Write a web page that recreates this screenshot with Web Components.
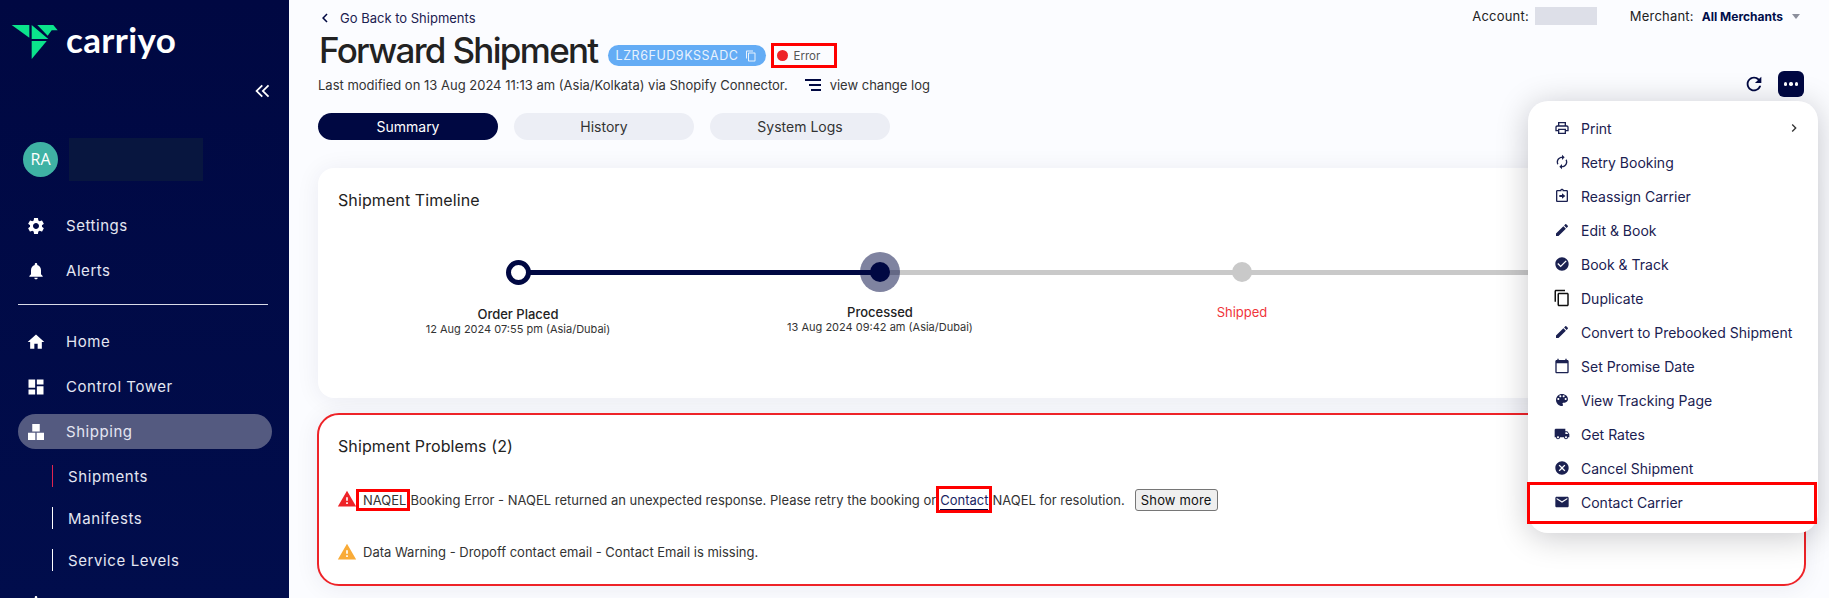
<!DOCTYPE html>
<html>
<head>
<meta charset="utf-8">
<title>Forward Shipment</title>
<style>
  html, body { height: 100%; }
  body {
    margin: 0;
    overflow: hidden;
    display: flex;
    background: #fbfcff;
    font-family: "Inter", "Liberation Sans", sans-serif;
  }
</style>
</head>
<body>
<carriyo-sidebar>
  <nav-item icon="settings">Settings</nav-item>
  <nav-item icon="bell">Alerts</nav-item>
  <nav-item slot="main" icon="home">Home</nav-item>
  <nav-item slot="main" icon="dashboard">Control Tower</nav-item>
  <nav-item slot="main" icon="boxes" active>Shipping</nav-item>
  <sub-item slot="main" current style="margin-top:1px">Shipments</sub-item>
  <sub-item slot="main">Manifests</sub-item>
  <sub-item slot="main">Service Levels</sub-item>
  <nav-item slot="main" icon="bell">Reports</nav-item>
</carriyo-sidebar>

<shipment-page>
  <shipment-card heading="Shipment Timeline">
    <shipment-timeline>
      <timeline-step kind="start" label="Order Placed" date="12 Aug 2024 07:55 pm (Asia/Dubai)"></timeline-step>
      <timeline-step kind="current" label="Processed" date="13 Aug 2024 09:42 am (Asia/Dubai)"></timeline-step>
      <timeline-step kind="error" label="Shipped"></timeline-step>
      <timeline-step kind="end"></timeline-step>
    </shipment-timeline>
  </shipment-card>
  <shipment-card heading="Shipment Problems (2)" problem>
    <problem-row level="error"><red-box>NAQEL</red-box>Booking Error - NAQEL returned an unexpected response. Please retry the booking or<red-box link>Contact</red-box>NAQEL for resolution.<more-button>Show more</more-button></problem-row>
    <problem-row level="warn">Data Warning - Dropoff contact email - Contact Email is missing.</problem-row>
  </shipment-card>
  <action-menu slot="menu">
    <menu-item icon="print" arrow>Print</menu-item>
    <menu-item icon="autorenew">Retry Booking</menu-item>
    <menu-item icon="reassign">Reassign Carrier</menu-item>
    <menu-item icon="edit">Edit &amp; Book</menu-item>
    <menu-item icon="check">Book &amp; Track</menu-item>
    <menu-item icon="copy" big>Duplicate</menu-item>
    <menu-item icon="edit">Convert to Prebooked Shipment</menu-item>
    <menu-item icon="calendar">Set Promise Date</menu-item>
    <menu-item icon="palette">View Tracking Page</menu-item>
    <menu-item icon="truck">Get Rates</menu-item>
    <menu-item icon="cancel">Cancel Shipment</menu-item>
    <menu-item icon="mail" marked>Contact Carrier</menu-item>
  </action-menu>
</shipment-page>

<script>
const ICONS = {
  settings: 'M19.14 12.94c.04-.3.06-.61.06-.94 0-.32-.02-.64-.07-.94l2.03-1.58c.18-.14.23-.41.12-.61l-1.92-3.32c-.12-.22-.37-.29-.59-.22l-2.39.96c-.5-.38-1.03-.7-1.62-.94l-.36-2.54c-.04-.24-.24-.41-.48-.41h-3.84c-.24 0-.43.17-.47.41l-.36 2.54c-.59.24-1.13.57-1.62.94l-2.39-.96c-.22-.08-.47 0-.59.22L2.74 8.87c-.12.21-.08.47.12.61l2.03 1.58c-.05.3-.09.63-.09.94s.02.64.07.94l-2.03 1.58c-.18.14-.23.41-.12.61l1.92 3.32c.12.22.37.29.59.22l2.39-.96c.5.38 1.03.7 1.62.94l.36 2.54c.05.24.24.41.48.41h3.84c.24 0 .44-.17.47-.41l.36-2.54c.59-.24 1.13-.56 1.62-.94l2.39.96c.22.08.47 0 .59-.22l1.92-3.32c.12-.22.07-.47-.12-.61l-2.01-1.58zM12 15.6c-1.98 0-3.6-1.62-3.6-3.6s1.62-3.6 3.6-3.6 3.6 1.62 3.6 3.6-1.62 3.6-3.6 3.6z',
  bell: 'M12 22c1.1 0 2-.9 2-2h-4c0 1.1.9 2 2 2zm6-6v-5c0-3.07-1.63-5.64-4.5-6.32V4c0-.83-.67-1.5-1.5-1.5s-1.5.67-1.5 1.5v.68C7.64 5.36 6 7.92 6 11v5l-2 2v1h16v-1l-2-2z',
  home: 'M10 20v-6h4v6h5v-8h3L12 3 2 12h3v8z',
  dashboard: 'M3 13h8V3H3v10zm0 8h8v-6H3v6zm10 0h8V11h-8v10zm0-18v6h8V3h-8z',
  boxes: 'M7.5 2.5h9v9h-9zM2.4 12.9h8.8v8.7H2.4zM12.8 12.9h8.8v8.7h-8.8z',
  print: 'M19 8h-1V3H6v5H5c-1.66 0-3 1.34-3 3v6h4v4h12v-4h4v-6c0-1.66-1.34-3-3-3zM8 5h8v3H8V5zm8 14H8v-4h8v4zm4-4h-2v-2H6v2H4v-4c0-.55.45-1 1-1h14c.55 0 1 .45 1 1v4z',
  autorenew: 'M12 6v3l4-4-4-4v3c-4.42 0-8 3.58-8 8 0 1.57.46 3.03 1.24 4.26L6.7 14.8c-.45-.83-.7-1.79-.7-2.8 0-3.31 2.69-6 6-6zm6.76 1.74L17.3 9.2c.44.84.7 1.79.7 2.8 0 3.31-2.69 6-6 6v-3l-4 4 4 4v-3c4.42 0 8-3.58 8-8 0-1.57-.46-3.03-1.24-4.26z',
  reassign: 'M19 3h-4.18C14.4 1.84 13.3 1 12 1s-2.4.84-2.82 2H5c-1.1 0-2 .9-2 2v14c0 1.1.9 2 2 2h14c1.1 0 2-.9 2-2V5c0-1.1-.9-2-2-2zm-7 0c.55 0 1 .45 1 1s-.45 1-1 1-1-.45-1-1 .45-1 1-1zm7 16H5V5h14v14zM8 10.5h4V8l5 4-5 4v-2.5H8z',
  edit: 'M3 17.25V21h3.75L17.81 9.94l-3.75-3.75L3 17.25zM20.71 7.04c.39-.39.39-1.02 0-1.41l-2.34-2.34c-.39-.39-1.02-.39-1.41 0l-1.83 1.83 3.75 3.75 1.83-1.83z',
  check: 'M12 2C6.48 2 2 6.48 2 12s4.48 10 10 10 10-4.48 10-10S17.52 2 12 2zm-2 15l-5-5 1.41-1.41L10 14.17l7.59-7.59L19 8l-9 9z',
  copy: 'M16 1H4c-1.1 0-2 .9-2 2v14h2V3h12V1zm3 4H8c-1.1 0-2 .9-2 2v14c0 1.1.9 2 2 2h11c1.1 0 2-.9 2-2V7c0-1.1-.9-2-2-2zm0 16H8V7h11v14z',
  calendar: 'M20 3h-1V1h-2v2H7V1H5v2H4c-1.1 0-2 .9-2 2v16c0 1.1.9 2 2 2h16c1.1 0 2-.9 2-2V5c0-1.1-.9-2-2-2zm0 18H4V8h16v13z',
  palette: 'M12 3c-4.97 0-9 4.03-9 9s4.03 9 9 9c.83 0 1.5-.67 1.5-1.5 0-.39-.15-.74-.39-1.01-.23-.26-.38-.61-.38-.99 0-.83.67-1.5 1.5-1.5H16c2.76 0 5-2.24 5-5 0-4.42-4.03-8-9-8zm-5.5 9c-.83 0-1.5-.67-1.5-1.5S5.67 9 6.5 9 8 9.67 8 10.5 7.33 12 6.5 12zm3-4C8.67 8 8 7.33 8 6.5S8.67 5 9.5 5s1.5.67 1.5 1.5S10.33 8 9.5 8zm5 0c-.83 0-1.5-.67-1.5-1.5S13.67 5 14.5 5s1.5.67 1.5 1.5S15.33 8 14.5 8zm3 4c-.83 0-1.5-.67-1.5-1.5S16.67 9 17.5 9s1.5.67 1.5 1.5-.67 1.5-1.5 1.5z',
  truck: 'M20 8h-3V4H3c-1.1 0-2 .9-2 2v11h2c0 1.66 1.34 3 3 3s3-1.34 3-3h6c0 1.66 1.34 3 3 3s3-1.34 3-3h2v-5l-3-4zM6 18.5c-.83 0-1.5-.67-1.5-1.5s.67-1.5 1.5-1.5 1.5.67 1.5 1.5-.67 1.5-1.5 1.5zm13.5-9l1.96 2.5H17V9.5h2.5zm-1.5 9c-.83 0-1.5-.67-1.5-1.5s.67-1.5 1.5-1.5 1.5.67 1.5 1.5-.67 1.5-1.5 1.5z',
  cancel: 'M12 2C6.47 2 2 6.47 2 12s4.47 10 10 10 10-4.47 10-10S17.53 2 12 2zm5 13.59L15.59 17 12 13.41 8.41 17 7 15.59 10.59 12 7 8.41 8.41 7 12 10.59 15.59 7 17 8.41 13.41 12 17 15.59z',
  mail: 'M20 4H4c-1.1 0-1.99.9-1.99 2L2 18c0 1.1.9 2 2 2h16c1.1 0 2-.9 2-2V6c0-1.1-.9-2-2-2zm0 4l-8 5-8-5V6l8 5 8-5v2z',
  refresh: 'M17.65 6.35C16.2 4.9 14.21 4 12 4c-4.42 0-7.99 3.58-7.99 8s3.57 8 7.99 8c3.73 0 6.84-2.55 7.73-6h-2.08c-.82 2.33-3.04 4-5.65 4-3.31 0-6-2.69-6-6s2.69-6 6-6c1.66 0 3.14.69 4.22 1.78L13 11h7V4l-2.35 2.35z',
  warning: 'M1 21h22L12 2 1 21zm12-3h-2v-2h2v2zm0-4h-2v-4h2v4z',
  back: 'M15.41 7.41L14 6l-6 6 6 6 1.41-1.41L10.83 12z',
  next: 'M8.59 16.59L10 18l6-6-6-6-1.41 1.41L13.17 12z',
  collapse: 'M11.6 4.6L4 12l7.6 7.4 1.5-1.5L7 12l6.1-5.9zM19.1 4.6L11.5 12l7.6 7.4 1.5-1.5-6.1-5.9 6.1-5.9z'
};

customElements.define('ui-icon', class extends HTMLElement {
  connectedCallback() {
    this.attachShadow({mode: 'open'});
    const size = this.getAttribute('size') || 16;
    this.shadowRoot.innerHTML = `
      <style>
        :host { display: inline-flex; flex: none; width: ${size}px; height: ${size}px; }
        svg { width: 100%; height: 100%; fill: currentColor; display: block; }
      </style>
      <svg viewBox="0 0 24 24"><path d="${ICONS[this.getAttribute('name')]}"/></svg>
    `;
  }
});

customElements.define('carriyo-sidebar', class extends HTMLElement {
  connectedCallback() {
    this.attachShadow({mode: 'open'});
    this.shadowRoot.innerHTML = `
      <style>
        :host {
          display: block;
          flex: none;
          width: 289px;
          height: 100%;
          overflow: hidden;
          background: linear-gradient(#000842, #010d4c);
          color: #e4e6f2;
          font-size: 15px;
        }
        .logo { display: flex; align-items: center; height: 36px; margin-top: 24px; padding-left: 11px; }
        .logo svg { width: 47px; height: 36px; flex: none; }
        .logo span {
          margin: -6px 0 0 8px;
          font: 700 35px/36px "Lato", sans-serif;
          letter-spacing: .35px;
          color: #fff;
        }
        .collapse { display: flex; justify-content: flex-end; padding-right: 17px; margin-top: 21px; color: #fff; }
        .user { display: flex; align-items: center; gap: 11px; margin: 37px 0 0 23px; height: 43px; }
        .avatar {
          width: 35px; height: 35px; border-radius: 50%;
          background: #3fb2a4; color: #fff;
          font: 500 16px/35px "Open Sans", sans-serif; text-align: center;
        }
        .name { width: 134px; height: 43px; background: #08163f; }
        .top { display: flex; flex-direction: column; gap: 10px; padding: 27px 17px 0 18px; }
        .rule { height: 1px; background: #d9dbe8; margin: 16px 21px 0 18px; }
        .rest { display: flex; flex-direction: column; gap: 10px; padding: 19px 17px 0 18px; }
      </style>
      <div class="logo">
        <svg viewBox="11 24 47 36">
          <g fill="#0be48c">
            <polygon points="11.7,25 29.3,25 29.3,37.7"/>
            <polygon points="31.7,25 31.7,39 48.3,39"/>
            <polygon points="37.3,25 53.3,25 57.7,30.3 51.7,30.3 47.7,35.7"/>
            <polygon points="31.7,41 46.7,41 31.7,59"/>
          </g>
        </svg>
        <span>carriyo</span>
      </div>
      <div class="collapse"><ui-icon name="collapse" size="20"></ui-icon></div>
      <div class="user"><div class="avatar">RA</div><div class="name"></div></div>
      <div class="top"><slot></slot></div>
      <div class="rule"></div>
      <div class="rest"><slot name="main"></slot></div>
    `;
  }
});

customElements.define('nav-item', class extends HTMLElement {
  connectedCallback() {
    this.attachShadow({mode: 'open'});
    this.shadowRoot.innerHTML = `
      <style>
        :host {
          display: flex; flex: none; align-items: center; gap: 20px;
          height: 35px; padding-left: 8px; border-radius: 18px;
          letter-spacing: .55px;
        }
        :host([active]) { background: #545a80; }
        ui-icon { color: #fff; }
      </style>
      <ui-icon name="${this.getAttribute('icon')}" size="20"></ui-icon>
      <slot></slot>
    `;
  }
});

customElements.define('sub-item', class extends HTMLElement {
  connectedCallback() {
    this.attachShadow({mode: 'open'});
    this.shadowRoot.innerHTML = `
      <style>
        :host { display: flex; flex: none; align-items: center; height: 32px; margin-left: 34px; letter-spacing: .6px; }
        .bar { width: 1px; height: 22px; background: #fff; margin-right: 15px; }
        :host([current]) .bar { background: #e0244f; }
      </style>
      <div class="bar"></div>
      <slot></slot>
    `;
  }
});

customElements.define('shipment-page', class extends HTMLElement {
  connectedCallback() {
    this.attachShadow({mode: 'open'});
    this.shadowRoot.innerHTML = `
      <style>
        :host {
          display: block; flex: 1; min-width: 0; position: relative;
          height: 100%; box-sizing: border-box; padding: 6px 23px 0 29px;
          overflow: hidden; color: #222; font-size: 13px;
        }
        .row { display: flex; align-items: center; justify-content: space-between; }
        .back { color: #1b2151; height: 24px; }
        .link { display: flex; align-items: center; margin-left: -2px; }
        .link ui-icon { color: #000842; }
        .link span { margin-left: 6px; }
        .account { display: flex; align-items: center; margin: -4px 6px 0 0; color: #222; letter-spacing: .2px; }
        .blank { width: 62px; height: 18px; background: #dddfe8; margin: 0 33px 0 6px; }
        .account b { color: #000d4a; font-size: 12px; font-weight: 700; letter-spacing: 0; margin-left: 8px; }
        .caret { width: 0; height: 0; margin-left: 9px; border: 4px solid transparent; border-top: 5px solid #8c8f9c; border-bottom: 0; }
        .title { display: flex; align-items: flex-start; height: 40px; }
        h1 {
          margin: 0 0 0 1px; font-size: 35px; line-height: 40px; font-weight: 500;
          letter-spacing: -1.7px; color: #222;
        }
        .pill {
          display: flex; align-items: center; gap: 6px;
          height: 21px; margin: 15px 0 0 10px; padding: 0 9px 0 8px;
          border-radius: 11px; background: #64acf5; color: #e8f2fd;
          font-size: 12.5px; letter-spacing: .55px;
        }
        .status {
          display: flex; align-items: center; gap: 6px;
          box-sizing: border-box; width: 66px; height: 25px; margin: 13px 0 0 5px; padding-left: 3px;
          border: 3px solid #f00; font-size: 11.5px; color: #555;
        }
        .dot { width: 11px; height: 11px; border-radius: 50%; background: #ee2328; }
        .modified { height: 26px; margin-top: 2px; color: #333; }
        .modified > div { display: flex; align-items: center; }
        .list { width: 16px; height: 12px; margin: 0 9px 0 17px; }
        .tools { gap: 13px; margin: 0 2px 2px 0; color: #000842; }
        .dots {
          display: flex; align-items: center; justify-content: center; gap: 2px;
          width: 26px; height: 26px; border-radius: 6px; background: #000842;
        }
        .dots i { width: 3.4px; height: 3.4px; border-radius: 50%; background: #fff; }
        .tabs { display: flex; gap: 16px; margin-top: 15px; }
        .tabs div {
          width: 180px; height: 27px; border-radius: 14px; background: #eceef5;
          font-size: 14px; line-height: 27px; text-align: center; color: #333;
        }
        .tabs .on { background: #000842; color: #fff; }
        .cards { display: flex; flex-direction: column; gap: 15px; margin-top: 28px; }
      </style>
      <div class="row back">
        <div class="link"><ui-icon name="back" size="18"></ui-icon><span>Go Back to Shipments</span></div>
        <div class="account">Account:<span class="blank"></span>Merchant:<b>All Merchants</b><span class="caret"></span></div>
      </div>
      <div class="title">
        <h1>Forward Shipment</h1>
        <div class="pill">LZR6FUD9KSSADC<ui-icon name="copy" size="12"></ui-icon></div>
        <div class="status"><span class="dot"></span>Error</div>
      </div>
      <div class="row modified">
        <div>Last modified on 13 Aug 2024 11:13 am (Asia/Kolkata) via Shopify Connector.
          <svg class="list" viewBox="0 0 16 12" fill="#000842"><rect width="16" height="2"/><rect x="4" y="5" width="12" height="2"/><rect x="6" y="10" width="10" height="2"/></svg>view change log</div>
        <div class="tools">
          <ui-icon name="refresh" size="22"></ui-icon>
          <div class="dots"><i></i><i></i><i></i></div>
        </div>
      </div>
      <div class="tabs"><div class="on">Summary</div><div>History</div><div>System Logs</div></div>
      <div class="cards"><slot></slot></div>
      <slot name="menu"></slot>
    `;
  }
});

customElements.define('shipment-card', class extends HTMLElement {
  connectedCallback() {
    this.attachShadow({mode: 'open'});
    this.shadowRoot.innerHTML = `
      <style>
        :host {
          display: block; box-sizing: border-box; height: 230px; padding: 20px 20px 0;
          background: #fff; border-radius: 16px;
          box-shadow: 0 2px 24px rgba(10, 20, 70, .07);
        }
        :host([problem]) {
          height: 173px; padding: 19px 20px 0 19px; margin-left: -1px;
          border: 2px solid #ee2328; border-radius: 22px;
        }
        h2 { margin: 0; font-size: 16px; line-height: 24px; font-weight: 400; color: #222; letter-spacing: .1px; }
        :host([problem]) h2 { margin-bottom: 27px; }
      </style>
      <h2>${this.getAttribute('heading')}</h2>
      <slot></slot>
    `;
  }
});

customElements.define('shipment-timeline', class extends HTMLElement {
  connectedCallback() {
    this.attachShadow({mode: 'open'});
    this.shadowRoot.innerHTML = `
      <style>
        :host { display: grid; grid-template-columns: repeat(4, 1fr); margin: 40px 1px 0 -1px; }
      </style>
      <slot></slot>
    `;
  }
});

customElements.define('timeline-step', class extends HTMLElement {
  connectedCallback() {
    this.attachShadow({mode: 'open'});
    const date = this.getAttribute('date');
    this.shadowRoot.innerHTML = `
      <style>
        :host { display: block; text-align: center; font-size: 13px; color: #222; }
        .track { display: grid; grid-template-columns: 1fr 1fr; align-items: center; height: 40px; }
        .half { grid-row: 1; height: 5px; background: #c9c9c9; }
        .l { grid-column: 1; } .r { grid-column: 2; }
        .node {
          grid-row: 1; grid-column: 1 / 3; justify-self: center; box-sizing: border-box;
          width: 20px; height: 20px; border-radius: 50%; background: #c9c9c9;
        }
        :host([kind=start]) .l, :host([kind=end]) .r { background: none; }
        :host([kind=start]) .r, :host([kind=current]) .l { background: #000842; }
        :host([kind=start]) .node { width: 25px; height: 25px; background: #fff; border: 5px solid #000842; }
        :host([kind=current]) .node { background: #000842; box-shadow: 0 0 0 10px rgba(0, 8, 66, .5); }
        .label { margin-top: 12px; line-height: 16px; font-weight: 500; }
        :host([kind=start]) .label { margin-top: 14px; }
        :host([kind=error]) .label { color: #f0353b; font-weight: 400; }
        .date { font-size: 11px; line-height: 15px; color: #333; }
      </style>
      <div class="track">
        <div class="half l"></div><div class="half r"></div><div class="node"></div>
      </div>
      <div class="label">${this.getAttribute('label') || ''}</div>
      ${date ? `<div class="date">${date}</div>` : ''}
    `;
  }
});

customElements.define('problem-row', class extends HTMLElement {
  connectedCallback() {
    this.attachShadow({mode: 'open'});
    const warn = this.getAttribute('level') === 'warn';
    this.shadowRoot.innerHTML = `
      <style>
        :host {
          display: flex; align-items: center; height: 28px; margin-bottom: 25px;
          font-size: 13px; color: #333; white-space: nowrap;
        }
        ui-icon { color: ${warn ? '#f9ab37' : '#ee2328'}; margin: 0 -1px; }
        :host([level=warn]) ui-icon { margin-right: 6px; }
      </style>
      <ui-icon name="warning" size="20"></ui-icon>
      <div><slot></slot></div>
    `;
  }
});

customElements.define('red-box', class extends HTMLElement {
  connectedCallback() {
    this.attachShadow({mode: 'open'});
    this.shadowRoot.innerHTML = `
      <style>
        :host { display: inline-block; border: 3px solid #f00; padding: 0 1px 0 4px; line-height: 16px; }
        :host([link]) { padding: 3px 1px 2px 1px; color: #1b1f63; }
        :host([link]) span { border-bottom: 1px solid #000842; padding-bottom: 1px; }
      </style>
      <span><slot></slot></span>
    `;
  }
});

customElements.define('more-button', class extends HTMLElement {
  connectedCallback() {
    this.attachShadow({mode: 'open'});
    this.shadowRoot.innerHTML = `
      <style>
        :host { display: inline-block; margin-left: 10px; }
        button {
          box-sizing: border-box; width: 83px; height: 22px; padding: 0;
          font: 13px "Inter", sans-serif; letter-spacing: .15px; color: #111;
          background: #efefef; border: 1px solid #767676; border-radius: 3px;
        }
      </style>
      <button><slot></slot></button>
    `;
  }
});

customElements.define('action-menu', class extends HTMLElement {
  connectedCallback() {
    this.attachShadow({mode: 'open'});
    this.shadowRoot.innerHTML = `
      <style>
        :host {
          position: absolute; left: 1239px; top: 101px; width: 290px; box-sizing: border-box;
          padding: 10px 0 14px; background: #fff; border-radius: 20px;
          box-shadow: 0 4px 32px rgba(0, 0, 20, .22);
        }
      </style>
      <slot></slot>
    `;
  }
});

customElements.define('menu-item', class extends HTMLElement {
  connectedCallback() {
    this.attachShadow({mode: 'open'});
    const big = this.hasAttribute('big');
    this.shadowRoot.innerHTML = `
      <style>
        :host {
          display: flex; align-items: center; position: relative;
          height: 34px; padding-left: 26px; font-size: 14px; color: #1b2151; white-space: nowrap;
        }
        .ic { width: 16px; display: flex; justify-content: center; margin-right: 11px; }
        ${big ? '.ic { color: #111; }' : ''}
        .ic ui-icon[size="18"] { margin: 0 -1px; }
        .arrow { margin-left: auto; margin-right: 16px; color: #333; }
        .mark { position: absolute; inset: -3px 1px -5px -1px; border: 3px solid #f00; }
      </style>
      <div class="ic"><ui-icon name="${this.getAttribute('icon')}" size="${big ? 18 : 16}"></ui-icon></div>
      <slot></slot>
      ${this.hasAttribute('arrow') ? '<ui-icon class="arrow" name="next" size="16"></ui-icon>' : ''}
      ${this.hasAttribute('marked') ? '<div class="mark"></div>' : ''}
    `;
  }
});
</script>
</body>
</html>
